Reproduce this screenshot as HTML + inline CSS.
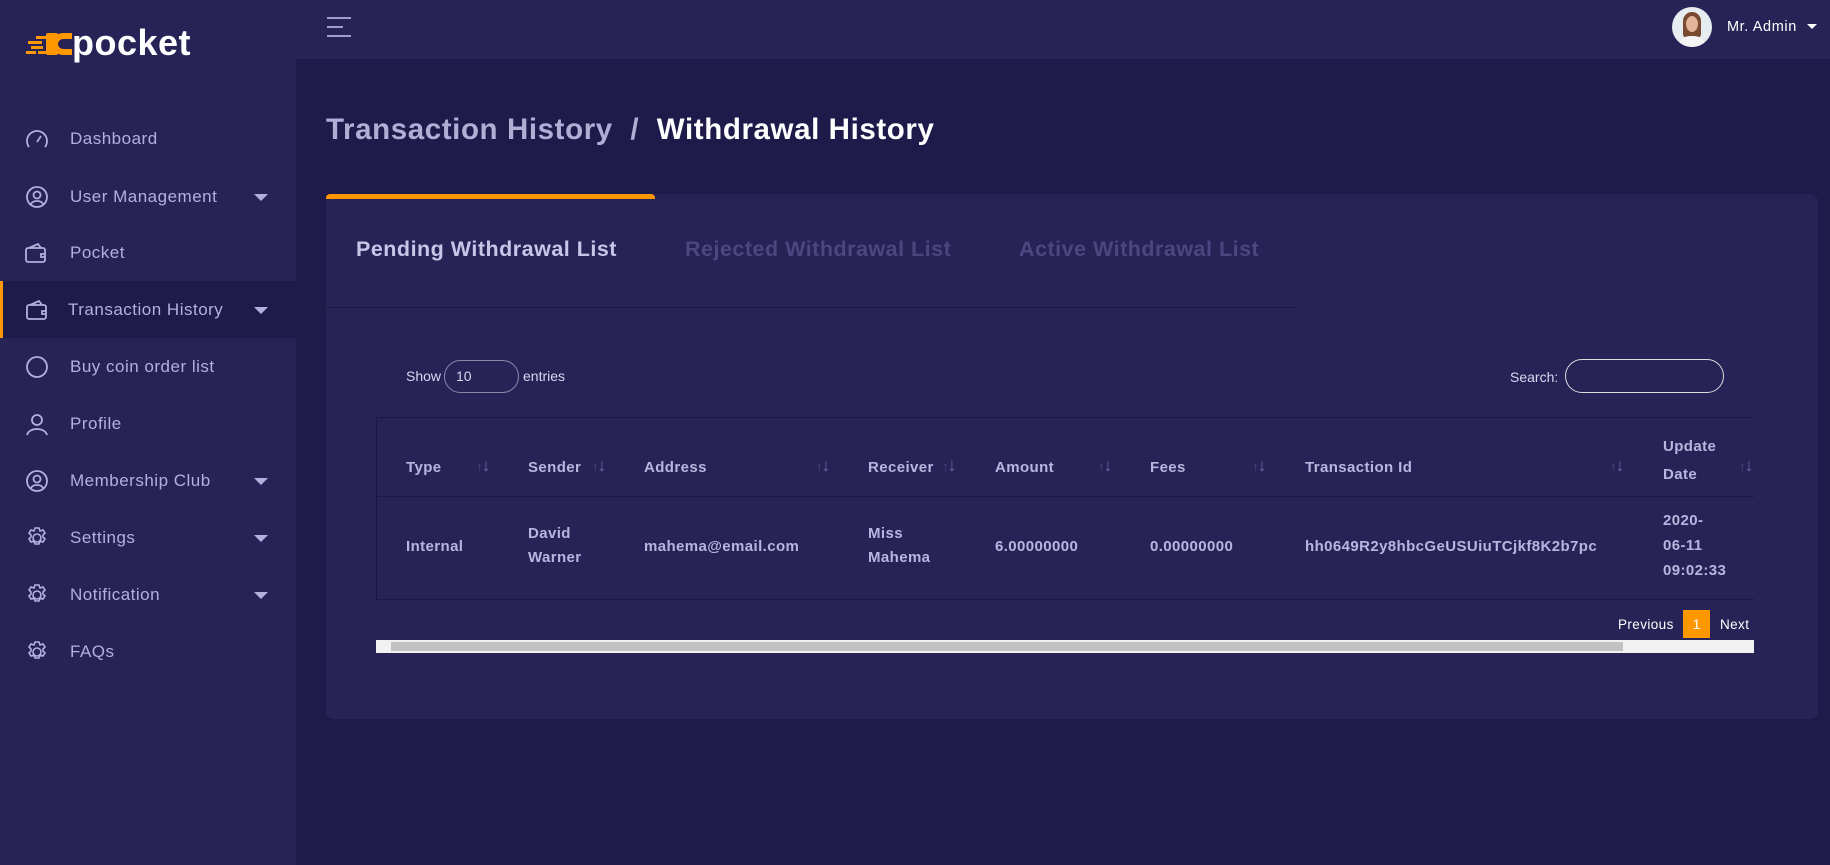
<!DOCTYPE html>
<html><head><meta charset="utf-8"><style>
*{box-sizing:border-box;margin:0;padding:0}
body{width:1830px;height:865px;overflow:hidden;background:#1e1a4a;font-family:"Liberation Sans",sans-serif;position:relative}
.side{position:absolute;left:0;top:0;width:296px;height:865px;background:#272357}
.top{position:absolute;left:296px;top:0;right:0;height:59px;background:#272357}
.logo{position:absolute;left:26px;top:26px;height:36px}
.logo .p{position:absolute;left:46px;top:-4px;font-size:36px;font-weight:bold;color:#fff;letter-spacing:0.5px}
.menu{position:absolute;left:0;width:296px;height:57px;display:flex;align-items:center;color:#b3b0dd;font-size:17px;letter-spacing:0.5px}
.menu svg{position:absolute;left:25px;top:50%;transform:translateY(-50%)}
.menu span{position:absolute;left:70px}
.menu.act{background:#1e1a4a;border-left:3px solid #ff9800}
.car{position:absolute;left:254px;top:50%;margin-top:-3px;border-left:7px solid transparent;border-right:7px solid transparent;border-top:7px solid #b3b0dd}
.title{position:absolute;left:326px;top:113px;font-size:29.5px;font-weight:bold;color:#b1aed6;letter-spacing:0.6px}
.title b{color:#fff}
.card{position:absolute;left:326px;top:194px;width:1492px;height:525px;background:#272357;border-radius:8px}
.otab{position:absolute;left:326px;top:194px;width:329px;height:5px;background:#ff9800;border-radius:4px 4px 0 0}
.tab{position:absolute;top:237px;font-size:21.5px;font-weight:bold;color:#4b4780;letter-spacing:0.5px}
.tline{position:absolute;left:326px;top:307px;width:971px;height:1px;background:#1b1744}
.sm{position:absolute;font-size:14px;color:#d8d6f0}
.inp{position:absolute;border:1px solid #8b88a8;border-radius:17px}
.tbl{position:absolute;left:376px;top:417px;width:1378px;height:183px;border-top:1px solid #1b1744;border-bottom:1px solid #1b1744;border-left:1px solid #1b1744}
.hl{position:absolute;left:376px;top:496px;width:1378px;height:1px;background:#1b1744}
.c{position:absolute;font-size:15px;font-weight:bold;color:#b8b6df;line-height:24px;letter-spacing:0.4px}
.s{position:absolute;font-size:13px;color:#4b4780;letter-spacing:-1px}
.s b{color:#6b68a0;font-size:18px}
</style></head><body>
<div class="side">
 <div class="logo">
  <svg width="46" height="34" viewBox="0 0 46 34"><g fill="#ff9800"><rect x="10" y="10" width="10" height="3"/><rect x="2" y="15" width="14" height="3"/><rect x="5" y="20" width="12" height="3"/><rect x="0" y="25" width="10" height="3"/><rect x="12" y="25" width="8" height="3"/><path d="M46 7 h-9 a11 11 0 0 0 0 22 h9 v-6 h-9 a5 5 0 0 1 0 -10 h9z"/><rect x="20" y="7" width="12" height="22" rx="2"/></g></svg>
  <div class="p">pocket</div>
 </div>
 <div class="menu" style="top:110px"><svg width="24" height="22" viewBox="0 0 24 22" fill="none" stroke="#b3b0dd" stroke-width="1.8"><path d="M4 19a10 10 0 1 1 16 0"/><path d="M12 14l4-6"/></svg><span>Dashboard</span></div>
 <div class="menu" style="top:168px"><svg width="24" height="24" viewBox="0 0 24 24" fill="none" stroke="#b3b0dd" stroke-width="1.8"><circle cx="12" cy="12" r="10"/><circle cx="12" cy="10" r="3.5"/><path d="M6 19c2-4 10-4 12 0"/></svg><span>User Management</span><i class="car"></i></div>
 <div class="menu" style="top:224px"><svg width="22" height="20" viewBox="0 0 22 20" fill="none" stroke="#b3b0dd" stroke-width="1.8"><rect x="1" y="5" width="19" height="14" rx="2"/><path d="M4 5l9-4 3 4"/><path d="M20 11h-4v3h4"/></svg><span>Pocket</span></div>
 <div class="menu act" style="top:281px"><svg width="22" height="20" viewBox="0 0 22 20" fill="none" stroke="#b3b0dd" stroke-width="1.8" style="left:23px"><rect x="1" y="5" width="19" height="14" rx="2"/><path d="M4 5l9-4 3 4"/><path d="M20 11h-4v3h4"/></svg><span style="left:65px">Transaction History</span><i class="car" style="left:251px"></i></div>
 <div class="menu" style="top:338px"><svg width="24" height="24" viewBox="0 0 24 24" fill="none" stroke="#b3b0dd" stroke-width="1.8"><circle cx="12" cy="12" r="10"/></svg><span>Buy coin order list</span></div>
 <div class="menu" style="top:395px"><svg width="24" height="24" viewBox="0 0 24 24" fill="none" stroke="#b3b0dd" stroke-width="1.8"><circle cx="12" cy="8" r="5"/><path d="M2 23c2-8 18-8 20 0"/></svg><span>Profile</span></div>
 <div class="menu" style="top:452px"><svg width="24" height="24" viewBox="0 0 24 24" fill="none" stroke="#b3b0dd" stroke-width="1.8"><circle cx="12" cy="12" r="10"/><circle cx="12" cy="10" r="3.5"/><path d="M6 19c2-4 10-4 12 0"/></svg><span>Membership Club</span><i class="car"></i></div>
 <div class="menu" style="top:509px"><svg width="24" height="24" viewBox="0 0 24 24" fill="none" stroke="#b3b0dd" stroke-width="1.6"><circle cx="12" cy="12" r="4"/><path d="M10 2h4l1 3 3-1 2 3-2 2 0 2 2 2-2 3-3-1-1 3h-4l-1-3-3 1-2-3 2-2 0-2-2-2 2-3 3 1z"/></svg><span>Settings</span><i class="car"></i></div>
 <div class="menu" style="top:566px"><svg width="24" height="24" viewBox="0 0 24 24" fill="none" stroke="#b3b0dd" stroke-width="1.6"><circle cx="12" cy="12" r="4"/><path d="M10 2h4l1 3 3-1 2 3-2 2 0 2 2 2-2 3-3-1-1 3h-4l-1-3-3 1-2-3 2-2 0-2-2-2 2-3 3 1z"/></svg><span>Notification</span><i class="car"></i></div>
 <div class="menu" style="top:623px"><svg width="24" height="24" viewBox="0 0 24 24" fill="none" stroke="#b3b0dd" stroke-width="1.6"><circle cx="12" cy="12" r="4"/><path d="M10 2h4l1 3 3-1 2 3-2 2 0 2 2 2-2 3-3-1-1 3h-4l-1-3-3 1-2-3 2-2 0-2-2-2 2-3 3 1z"/></svg><span>FAQs</span></div>
</div>
<div class="top">
 <svg style="position:absolute;left:31px;top:16px" width="24" height="22" viewBox="0 0 24 22" stroke="#b3b0dd" stroke-width="1.8"><path d="M0 2h24M0 11h16M0 20h24"/></svg>
 <div style="position:absolute;left:1376px;top:7px;width:40px;height:40px;border-radius:50%;background:#e6ecef;overflow:hidden">
  <div style="position:absolute;left:11px;top:5px;width:18px;height:26px;border-radius:9px 9px 4px 4px;background:#7a4a30"></div>
  <div style="position:absolute;left:14px;top:9px;width:12px;height:16px;border-radius:50%;background:#e3b49a"></div>
  <div style="position:absolute;left:6px;top:29px;width:28px;height:14px;border-radius:12px 12px 0 0;background:#f4f4f4"></div>
 </div>
 <div style="position:absolute;left:1431px;top:19px;font-size:14.5px;color:#fff;letter-spacing:0.6px">Mr. Admin</div>
 <i style="position:absolute;left:1511px;top:24px;border-left:5px solid transparent;border-right:5px solid transparent;border-top:5px solid #fff"></i>
</div>
<div class="title">Transaction History&nbsp; / &nbsp;<b>Withdrawal History</b></div>
<div class="card"></div>
<div class="otab"></div>
<div class="tab" style="left:356px;color:#c8c6e8">Pending Withdrawal List</div>
<div class="tab" style="left:685px">Rejected Withdrawal List</div>
<div class="tab" style="left:1019px">Active Withdrawal List</div>
<div class="tline"></div>
<div class="sm" style="left:406px;top:368px">Show</div>
<div class="inp" style="left:444px;top:360px;width:75px;height:33px"></div>
<div class="sm" style="left:456px;top:368px">10</div>
<div class="sm" style="left:523px;top:368px">entries</div>
<div class="sm" style="left:1510px;top:369px">Search:</div>
<div class="inp" style="left:1565px;top:359px;width:159px;height:34px;border-color:#ddd"></div>
<div class="tbl"></div><div class="hl"></div>
<div class="c" style="left:406px;top:456px">Type</div><div class="s" style="left:476px;top:455px">↑<b>↓</b></div>
<div class="c" style="left:528px;top:456px">Sender</div><div class="s" style="left:592px;top:455px">↑<b>↓</b></div>
<div class="c" style="left:644px;top:456px">Address</div><div class="s" style="left:816px;top:455px">↑<b>↓</b></div>
<div class="c" style="left:868px;top:456px">Receiver</div><div class="s" style="left:942px;top:455px">↑<b>↓</b></div>
<div class="c" style="left:995px;top:456px">Amount</div><div class="s" style="left:1098px;top:455px">↑<b>↓</b></div>
<div class="c" style="left:1150px;top:456px">Fees</div><div class="s" style="left:1252px;top:455px">↑<b>↓</b></div>
<div class="c" style="left:1305px;top:456px">Transaction Id</div><div class="s" style="left:1610px;top:455px">↑<b>↓</b></div>
<div class="c" style="left:1663px;top:433px;line-height:28px">Update<br>Date</div><div class="s" style="left:1739px;top:455px">↑<b>↓</b></div>
<div class="c" style="left:406px;top:535px">Internal</div>
<div class="c" style="left:528px;top:522px">David<br>Warner</div>
<div class="c" style="left:644px;top:535px">mahema@email.com</div>
<div class="c" style="left:868px;top:522px">Miss<br>Mahema</div>
<div class="c" style="left:995px;top:535px">6.00000000</div>
<div class="c" style="left:1150px;top:535px">0.00000000</div>
<div class="c" style="left:1305px;top:535px">hh0649R2y8hbcGeUSUiuTCjkf8K2b7pc</div>
<div class="c" style="left:1663px;top:508px;line-height:25px">2020-<br>06-11<br>09:02:33</div>
<div class="sm" style="left:1618px;top:617px;color:#fff;font-size:13.5px;letter-spacing:0.4px">Previous</div>
<div style="position:absolute;left:1683px;top:610px;width:27px;height:28px;background:#ff9800;color:#fff;font-size:14px;text-align:center;line-height:28px">1</div>
<div class="sm" style="left:1720px;top:617px;color:#fff;font-size:13.5px;letter-spacing:0.4px">Next</div>
<div style="position:absolute;left:376px;top:640px;width:1378px;height:13px;background:#f1f1f1"></div>
<div style="position:absolute;left:391px;top:642px;width:1232px;height:9px;background:#c1c1c1"></div>
</body></html>
